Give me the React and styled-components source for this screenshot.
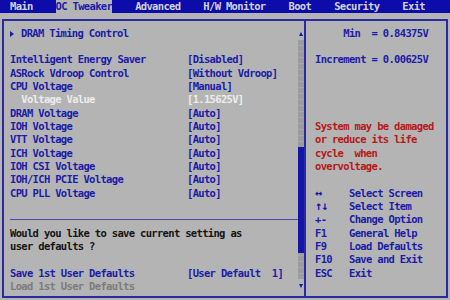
import React from "react";
import styled, { createGlobalStyle } from "styled-components";

const GlobalStyle = createGlobalStyle`
  html, body {
    margin: 0;
    padding: 0;
    background: #b4b4b4;
  }

  body {
    font-family: "DejaVu Sans Mono", "Liberation Mono", monospace;
    font-size: 10.5px;
    font-weight: bold;
    letter-spacing: -0.67px;
    line-height: 13.33px;
  }
`;

const Screen = styled.div`
  width: 450px;
  height: 300px;
  display: flex;
  flex-direction: column;
  overflow: hidden;
  background: #b4b4b4;
`;

const TabBar = styled.div`
  flex: none;
  height: 13px;
  display: flex;
  gap: 23px;
  padding-left: 10px;
  background: #0c0cab;
  line-height: 13px;
`;

const Tab = styled.span`
  white-space: pre;
  color: ${(p) => (p.$active ? "#1c1ca8" : "#d2d2d8")};
  background: ${(p) => (p.$active ? "#b4b4b4" : "transparent")};
`;

const Frame = styled.div`
  flex: 1;
  display: flex;
  margin: 6px 2px 2px;
  border: 2px solid #2a2aa4;
`;

const MainPane = styled.div`
  width: 300px;
  display: flex;
`;

const Content = styled.div`
  flex: 1;
  display: flex;
  flex-direction: column;
  padding: 5.67px 0 0 6px;
`;

const Gap = styled.div`
  height: calc(${(p) => p.$lines} * 13.33px);
`;

const Row = styled.div`
  display: grid;
  grid-template-columns: 177px auto;
  white-space: pre;
  color: ${(p) =>
    p.$tone === "selected"
      ? "#ececec"
      : p.$tone === "disabled"
      ? "#7c7c7c"
      : p.$tone === "plain"
      ? "#151515"
      : "#1c1ca8"};
`;

const Pointer = styled.span`
  display: inline-block;
  width: 0;
  height: 0;
  margin-right: 7px;
  border-left: 4.5px solid #1c1ca8;
  border-top: 3px solid transparent;
  border-bottom: 3px solid transparent;
  vertical-align: 0px;
`;

const Divider = styled.div`
  height: 13.33px;
  display: flex;
  align-items: center;

  &::after {
    content: "";
    flex: 1;
    height: 1px;
    background: #4a4aa8;
  }
`;

const ScrollBar = styled.div`
  width: 6px;
  display: flex;
  flex-direction: column;
  align-items: center;
  padding-top: 11px;
`;

const Arrow = styled.div`
  width: 0;
  height: 0;
  border-left: 2.5px solid transparent;
  border-right: 2.5px solid transparent;
  ${(p) =>
    p.$down
      ? "border-top: 4px solid #1414a8;"
      : "border-bottom: 4px solid #1414a8;"}
`;

const Track = styled.div`
  align-self: stretch;
  height: 239px;
  margin: 4px 0 5px;
  display: flex;
  flex-direction: column;
  background: repeating-linear-gradient(
    180deg,
    #9c9c9c 0px,
    #9c9c9c 5px,
    #a8a8a8 5px,
    #a8a8a8 6px
  );
`;

const Thumb = styled.div`
  margin-top: 107px;
  height: 106px;
  background: #1414a8;
`;

const SidePane = styled.div`
  flex: 1;
  border-left: 2px solid #2a2aa4;
  padding: 5.67px 0 0 9px;
  color: #1c1ca8;
  white-space: pre;
`;

const Line = styled.div`
  color: ${(p) => (p.$warn ? "#b51a1a" : "inherit")};
`;

const KeyList = styled.div`
  display: grid;
  grid-template-columns: 34px auto;
`;

const KeyGlyph = styled.span`
  font-size: ${(p) => (p.$wide ? "12px" : "inherit")};
  letter-spacing: ${(p) => (p.$wide ? "-1px" : "inherit")};
`;

const settings = [
  ["Intelligent Energy Saver", "[Disabled]"],
  ["ASRock Vdroop Control", "[Without Vdroop]"],
  ["CPU Voltage", "[Manual]"],
  ["  Voltage Value", "[1.15625V]", "selected"],
  ["DRAM Voltage", "[Auto]"],
  ["IOH Voltage", "[Auto]"],
  ["VTT Voltage", "[Auto]"],
  ["ICH Voltage", "[Auto]"],
  ["IOH CSI Voltage", "[Auto]"],
  ["IOH/ICH PCIE Voltage", "[Auto]"],
  ["CPU PLL Voltage", "[Auto]"],
];

const keys = [
  ["↔", "Select Screen", true],
  ["↑↓", "Select Item", true],
  ["+-", "Change Option"],
  ["F1", "General Help"],
  ["F9", "Load Defaults"],
  ["F10", "Save and Exit"],
  ["ESC", "Exit"],
];

const tabs = ["Main", "OC Tweaker", "Advanced", "H/W Monitor", "Boot", "Security", "Exit"];

function App() {
  return (
    <Screen>
      <GlobalStyle />
      <TabBar>
        {tabs.map((t) => (
          <Tab key={t} $active={t === "OC Tweaker"}>
            {t}
          </Tab>
        ))}
      </TabBar>
      <Frame>
        <MainPane>
          <Content>
            <Row>
              <span>
                <Pointer />
                DRAM Timing Control
              </span>
            </Row>
            <Gap $lines={1} />
            {settings.map(([label, value, tone]) => (
              <Row key={label} $tone={tone}>
                <span>{label}</span>
                <span>{value}</span>
              </Row>
            ))}
            <Gap $lines={1} />
            <Divider />
            <Row $tone="plain">Would you like to save current setting as</Row>
            <Row $tone="plain">user defaults ?</Row>
            <Gap $lines={1} />
            <Row>
              <span>Save 1st User Defaults</span>
              <span>[User Default  1]</span>
            </Row>
            <Row $tone="disabled">Load 1st User Defaults</Row>
          </Content>
          <ScrollBar>
            <Arrow />
            <Track>
              <Thumb />
            </Track>
            <Arrow $down />
          </ScrollBar>
        </MainPane>
        <SidePane>
          <Line>{"     Min  = 0.84375V"}</Line>
          <Gap $lines={1} />
          <Line>Increment = 0.00625V</Line>
          <Gap $lines={4} />
          <Line $warn>System may be damaged</Line>
          <Line $warn>or reduce its life</Line>
          <Line $warn>{"cycle  when"}</Line>
          <Line $warn>overvoltage.</Line>
          <Gap $lines={1} />
          <KeyList>
            {keys.map(([k, d, wide]) => (
              <React.Fragment key={d}>
                <KeyGlyph $wide={wide}>{k}</KeyGlyph>
                <span>{d}</span>
              </React.Fragment>
            ))}
          </KeyList>
        </SidePane>
      </Frame>
    </Screen>
  );
}

export default App;
